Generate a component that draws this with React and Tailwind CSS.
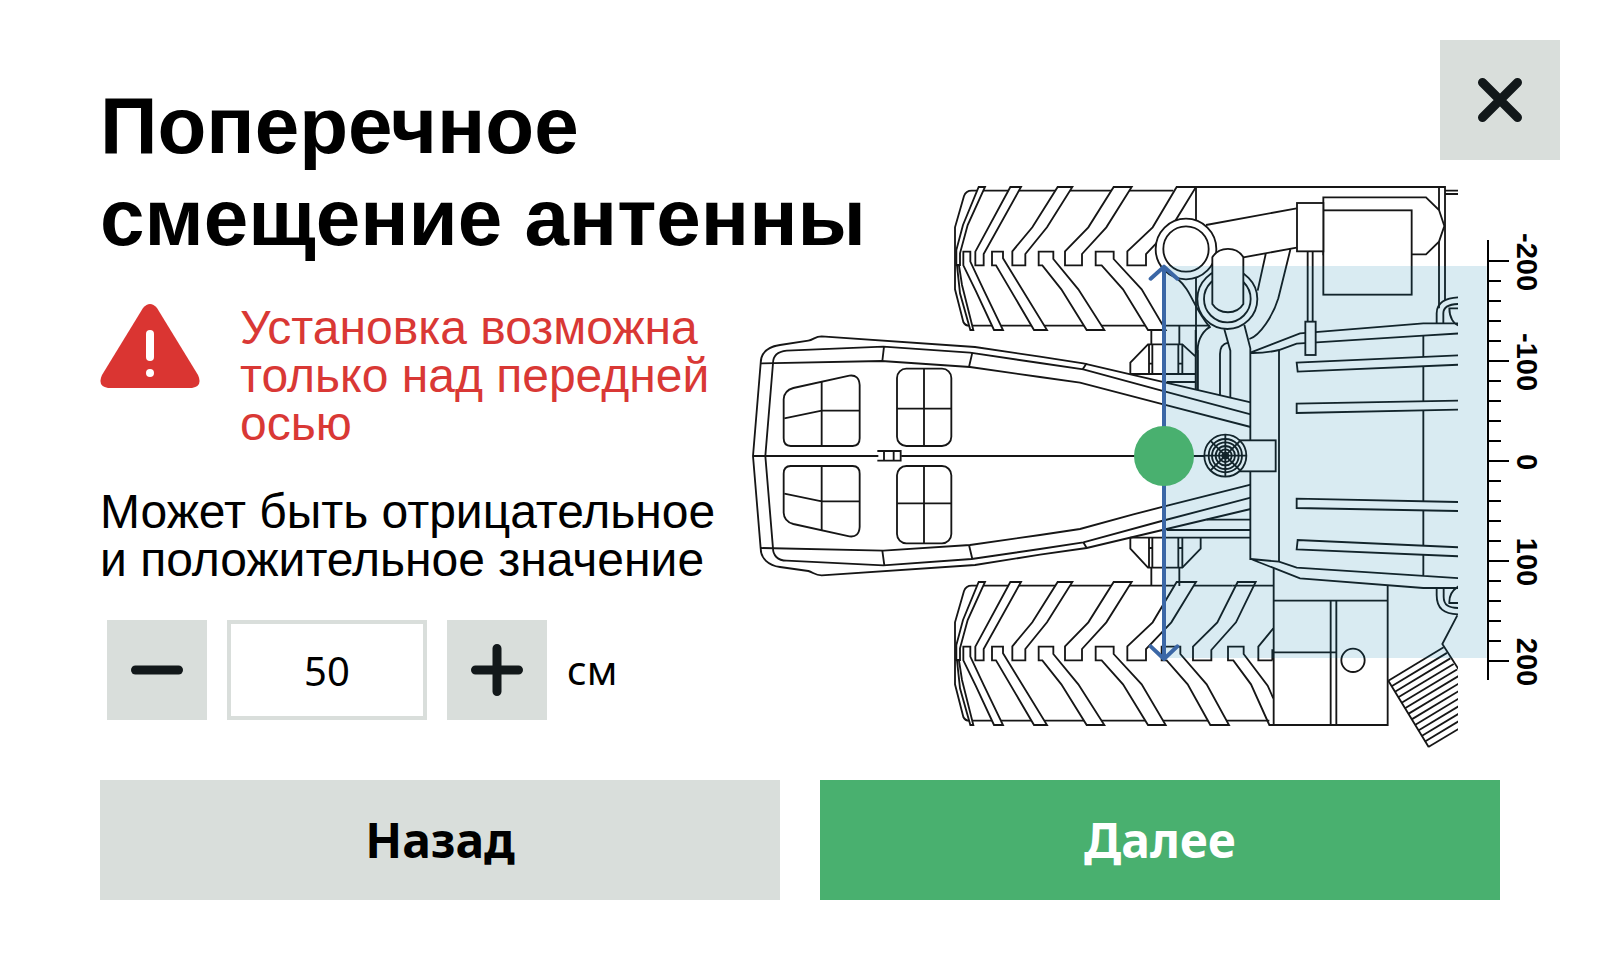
import { useState } from 'react';

const UPPER_LUGS = [
    '116,51 135,51 83,165 60,250 60,285 49,285 49,240 69,165',
    '211,51 243,51 131,252 131,286 106,286 106,245',
    '353,51 397,51 321,172 256,252 256,286 217,286 217,244 277,172',
    '521,51 575,51 499,172 426,252 426,286 375,286 375,244 445,172',
    '710,51 768,51 694,172 618,252 618,286 562,286 562,244 638,172',
    '893,51 947,51 888,172 814,255 814,286 759,286 759,245 832,172',
];

const LOWER_LUGS = [
    '51,286 57,286 66,345 100,480 91,480 60,370',
    '70,245 91,245 91,275 132,362 189,480 162,480 107,362 70,286',
    '156,245 189,245 189,265 321,480 282,480 168,286 156,286',
    '296,245 340,245 340,267 415,358 493,480 440,480 364,358 307,286 296,286',
    '467,245 521,245 521,267 605,358 677,480 624,480 549,358 485,286 467,286',
    '665,245 721,245 721,267 800,358 867,480 811,480 743,358 680,286 665,286',
];

const TICKS = Array.from({ length: 21 }, (_, i) => ({
    y: 273 + i * 60,
    label: i % 5 === 0 ? (i / 5 - 2) * 100 : null,
}));

function Tire({ y, upper, lower, end }) {
    return (
        <g transform={`translate(600 ${y})`}>
            <path d={`M${end - 110} 62H95Q78 62 72 78L45 172V358L70 456Q75 467 88 467H${end}`} />
            {UPPER_LUGS.slice(0, upper).map((points) => (
                <polygon key={points} points={points} />
            ))}
            {LOWER_LUGS.slice(0, lower).map((points) => (
                <polygon key={points} points={points} />
            ))}
        </g>
    );
}

function CabWindows({ transform }) {
    return (
        <g transform={transform}>
            <path d="M152 378H338Q359 378 359 355V195Q357 163 328 167L160 204Q132 212 131 238V355Q131 378 152 378Z" />
            <path d="M245 185V378M133 295L245 272H359" />
            <rect x="471" y="146" width="163" height="232" rx="28" />
            <path d="M552 146V378M471 266H634" />
        </g>
    );
}

function Tractor() {
    return (
        <g fill="white" stroke="#161616" strokeWidth="5.5" clipPath="url(#tractor-clip)">
            <Tire y={0} upper={5} lower={5} end={810} />
            <Tire y={1185} upper={6} lower={6} end={988} />
            <g transform="translate(600 1185)" fill="none">
                <path d="M878 62H1000M1000 190L955 245V286H998M1000 400L983 362L911 267V245H864V286H880L933 358L988 480H1002" />
            </g>

            {/* axle */}
            <g transform="translate(840 480)" fill="none">
                <path d="M394 0V43M478 -14V43M331 132V98L384 43H487L527 80M331 132H527M440 156H527M527 0V180M533 60V180" />
                <path d="M387 43V132M397 43V132M475 43V132M487 43V132M387 101H397M475 101H487" />
                <path d="M331 623V656L384 713H487L542 656V623M331 623H692M440 600H692M560 569H692M394 713V768M478 713V768" />
                <path d="M387 623V713M397 623V713M475 623V713M487 623V713M387 654H397M475 654H487" />
            </g>

            {/* engine bay */}
            <g transform="translate(1170 0)">
                <g fill="none">
                    <path d="M138 51H945V390M927 51V415M198 51V550M945 62H990M945 72H990" />
                    <path d="M228 165L500 115M340 262L500 233M408 248L383 362M482 235L445 385C430 435 390 497 358 507" />
                    <path d="M143 327C185 362 186 405 238 470" />
                    <path d="M203 660V540C203 505 222 480 242 470M270 675V552C270 532 280 521 294 518M283 478L301 542V683" />
                    <path d="M343 465L361 535V1170M447 540V1175" />
                    <path d="M361 548L510 490L880 460H990M361 549C400 550 425 545 447 540L500 521L880 497L990 490" />
                    <path d="M920 460V430C920 400 945 382 990 382M940 460V430C940 412 955 402 990 402M990 415H958C958 440 970 465 990 467" />
                </g>
                <circle cx="168" cy="237" r="91" />
                <circle cx="168" cy="237" r="68" />
                <circle cx="292" cy="387" r="90" />
                <circle cx="292" cy="387" r="70" />
                <path d="M247 262C268 228 320 228 340 262V402C320 435 268 435 247 402Z" />
                <path d="M580 82H888L927 120L943 168L927 215L888 253H580Z" />
                <rect x="580" y="121" width="265" height="253" />
                <rect x="533" y="240" width="15" height="220" />
                <rect x="501" y="99" width="79" height="145" />
                <rect x="526" y="455" width="31" height="100" />
            </g>

            {/* hood */}
            <g transform="translate(1560 480)">
                <path d="M-28 687L57 695L110 713L600 745M-28 687L120 745L490 774H600M490 17V738" fill="none" />
                <path d="M600 76L110 98L113 125L600 104" />
                <path d="M600 212L110 221V249L600 239" />
                <path d="M600 516L110 506V534L600 543" />
                <path d="M600 652L113 630L110 658L600 679" />
            </g>

            {/* fuel tank and hose */}
            <g transform="translate(1470 1170)" fill="none">
                <path d="M131 25V495H473V76M131 122H473M302 122V495M319 122V495M131 277H319M127 268V300" />
                <circle cx="369" cy="301" r="35" />
                <path d="M620 85V105C620 145 640 163 690 163M641 85V110C641 135 655 144 690 144M690 76C668 88 657 108 658 129H690" />
                <path d="M682 166L637 252L700 350M475 362L596 561" />
                {Array.from({ length: 13 }, (_, i) => (
                    <path key={i} d={`M${475 + i * 10} ${362 + i * 16.6}l166 -100`} />
                ))}
            </g>

            {/* cab */}
            <g transform="translate(0 450)">
                <g fill="none">
                    <path d="M1532 247L1030 130L900 110L705 81L245 49C225 49 220 60 205 62L120 75C85 80 62 98 62 130L39 408L62 685C62 715 85 736 120 741L205 753C220 757 225 766 245 766L705 735L900 704L1040 684L1280 627L1532 567" />
                    <path d="M1532 283L1265 212L1030 148L900 129L690 98L430 80L140 92C110 95 99 110 99 130L76 408L99 685C99 705 112 722 140 722L430 736L695 717L900 687L1030 667L1265 603L1532 533" />
                    <path d="M62 130L425 123L690 141L900 171L1020 188L1270 253L1532 321M62 684L430 692L690 675L900 645L1020 627L1180 583L1270 560L1532 494" />
                    <path d="M432 80L427 123M697 98L687 141M427 692L433 736M687 675L697 717M1040 130L1028 148M1030 667L1040 684" />
                    <path d="M39 408H415M485 408H1532M412 393H482V422H412M432 393V422M461 393V422" />
                </g>
                <CabWindows />
                <CabWindows transform="translate(0 816) scale(1 -1)" />
            </g>

            {/* exhaust cap */}
            <g transform="translate(1456 857)">
                <rect x="40" y="-46" width="111" height="93" />
                {[63, 50, 40, 29, 19, 9].map((r) => (
                    <circle key={r} r={r} />
                ))}
                <path d="M-63 0H63M0 -63V63M-45 -45L45 45M-45 45L45 -45" />
            </g>
        </g>
    );
}

function AntennaDiagram() {
    return (
        <svg
            viewBox="0 0 2460 1770"
            role="img"
            aria-label="Схема смещения антенны"
            className="col-start-2 row-start-1 row-span-2 mt-[130px] w-full self-start"
        >
            <clipPath id="tractor-clip">
                <rect width="2154" height="1770" />
            </clipPath>
            <Tractor />
            <rect x="1272" y="288" width="968" height="1176" fill="#027aa8" fillOpacity="0.15" />
            <g stroke="black" strokeWidth="6">
                <path d="M2244 210V1530" />
                {TICKS.map(({ y, label }) => (
                    <path key={y} d={`M2244 ${y}H${label === null ? 2283 : 2307}`} />
                ))}
            </g>
            {TICKS.filter(({ label }) => label !== null).map(({ y, label }) => (
                <text
                    key={y}
                    transform={`translate(2330 ${y + 3}) rotate(90)`}
                    textAnchor="middle"
                    className="font-['Liberation_Sans',sans-serif] text-[87px] font-bold"
                >
                    {label}
                </text>
            ))}
            <g fill="none" stroke="#3b67a6" strokeWidth="12" strokeLinecap="round" strokeLinejoin="round">
                <path d="M1272 290V1467M1232 326L1272 290L1312 326M1232 1429L1272 1467L1312 1429" />
            </g>
            <circle cx="1272" cy="858" r="90" fill="#49b06f" />
        </svg>
    );
}

function WarningIcon() {
    return (
        <svg viewBox="0 0 100 84" className="w-[100px] shrink-0 self-start" aria-hidden="true">
            <path d="M43 4Q50 -4 57 4L98 71Q103 82 92 84H8Q-3 82 2 71Z" fill="#da3532" />
            <path d="M50 30V53" stroke="white" strokeWidth="8" strokeLinecap="round" />
            <circle cx="50" cy="69" r="4" fill="white" />
        </svg>
    );
}

function StrokeIcon({ d }) {
    return (
        <svg viewBox="0 0 60 60" className="size-[60px]" fill="none" stroke="#12181a" strokeWidth="9" strokeLinecap="round" aria-hidden="true">
            <path d={d} />
        </svg>
    );
}

export default function App() {
    const [offset, setOffset] = useState('50');

    const changeOffset = (step) => {
        setOffset(String((Number(offset) || 0) + step));
    };

    return (
        <main className="min-h-screen bg-white pt-10 pr-10 pb-[60px] pl-[100px] font-['Liberation_Sans',Arial,sans-serif] text-black">
            <div className="grid grid-cols-[640px_1fr] grid-rows-[auto_1fr]">
                <AntennaDiagram />
                <h1 className="z-10 col-span-2 col-start-1 row-start-1 mt-10 max-w-[800px] text-[80px] leading-[92px] font-bold">
                    Поперечное смещение антенны
                </h1>
                <button
                    type="button"
                    aria-label="Закрыть"
                    className="z-10 col-start-2 row-start-1 flex size-[120px] items-center justify-center self-start justify-self-end bg-[#d9dedb]"
                >
                    <StrokeIcon d="M12.5 12.5L47.5 47.5M47.5 12.5L12.5 47.5" />
                </button>

                <div className="col-start-1 row-start-2 text-5xl leading-[48px]">
                    <div className="mt-10 flex gap-10">
                        <WarningIcon />
                        <p className="text-[#d93835]">Установка возможна только над передней осью</p>
                    </div>
                    <p className="mt-10">Может быть отрицательное и положительное значение</p>
                    <div className="mt-9 ml-[7px] flex items-center gap-5 font-['Noto_Sans',sans-serif] text-[40px]">
                        <button
                            type="button"
                            aria-label="Уменьшить"
                            onClick={() => changeOffset(-1)}
                            className="flex size-[100px] items-center justify-center bg-[#d9dedb]"
                        >
                            <StrokeIcon d="M8.5 30H51.5" />
                        </button>
                        <input
                            id="offset"
                            type="text"
                            inputMode="numeric"
                            value={offset}
                            onChange={(e) => setOffset(e.target.value)}
                            className="h-[100px] w-[200px] border-4 border-[#d9dedb] bg-white text-center"
                        />
                        <button
                            type="button"
                            aria-label="Увеличить"
                            onClick={() => changeOffset(1)}
                            className="flex size-[100px] items-center justify-center bg-[#d9dedb]"
                        >
                            <StrokeIcon d="M8.5 30H51.5M30 8.5V51.5" />
                        </button>
                        <label htmlFor="offset">см</label>
                    </div>
                </div>
            </div>

            <div className="mt-5 mr-[60px] grid grid-cols-2 gap-10 font-['Noto_Sans',sans-serif] text-5xl font-bold">
                <button type="button" className="h-[120px] bg-[#d9dedb]">
                    Назад
                </button>
                <button type="button" className="h-[120px] bg-[#49b06f] text-white">
                    Далее
                </button>
            </div>
        </main>
    );
}
